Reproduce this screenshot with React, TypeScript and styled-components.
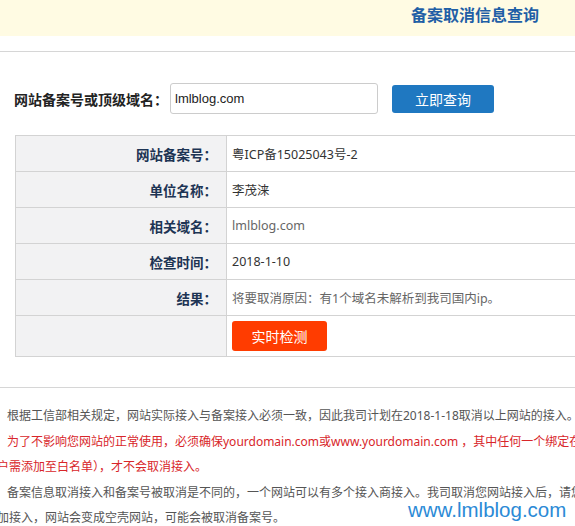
import styled, { createGlobalStyle } from "styled-components";

const GlobalStyle = createGlobalStyle`
    html, body {
        margin: 0;
        padding: 0;
        background: #ffffff;
        overflow: hidden;
    }

    body {
        font-family: "Segoe UI", "Noto Sans", "Noto Sans CJK SC", sans-serif;
        color: #333333;
    }
`;

interface Record {
    label: string;
    value: string;
    muted?: boolean;
}

const records: Record[] = [
    { label: "网站备案号：", value: "粤ICP备15025043号-2" },
    { label: "单位名称：", value: "李茂涞" },
    { label: "相关域名：", value: "lmlblog.com", muted: true },
    { label: "检查时间：", value: "2018-1-10" },
    { label: "结果：", value: "将要取消原因：有1个域名未解析到我司国内ip。", muted: true },
];

export default function App() {
    return (
        <>
            <GlobalStyle />
            <Page>
                <Header>
                    <Title>备案取消信息查询</Title>
                </Header>
                <Divider />

                <SearchRow>
                    <SearchLabel>网站备案号或顶级域名：</SearchLabel>
                    <SearchInput defaultValue="lmlblog.com" />
                    <QueryButton>立即查询</QueryButton>
                </SearchRow>

                <ResultTable>
                    <tbody>
                        {records.map((record) => (
                            <tr key={record.label}>
                                <LabelCell>{record.label}</LabelCell>
                                <ValueCell $muted={record.muted}>{record.value}</ValueCell>
                            </tr>
                        ))}
                        <tr>
                            <LabelCell />
                            <ActionCell>
                                <CheckButton>实时检测</CheckButton>
                            </ActionCell>
                        </tr>
                    </tbody>
                </ResultTable>

                <Divider $gap={30} />

                <Notes>
                    <Note>
                        根据工信部相关规定，网站实际接入与备案接入必须一致，因此我司计划在2018-1-18取消以上网站的接入。如有疑问请联系客服。
                    </Note>
                    <Note $warn>
                        为了不影响您网站的正常使用，必须确保yourdomain.com或www.yourdomain.com ，其中任何一个绑定在我司的域名（如果是我司客
                        <br />
                        户需添加至白名单），才不会取消接入。
                    </Note>
                    <Note>
                        备案信息取消接入和备案号被取消是不同的，一个网站可以有多个接入商接入。我司取消您网站接入后，请您尽快到其他接入商处添
                        <br />
                        加接入，网站会变成空壳网站，可能会被取消备案号。
                    </Note>
                </Notes>

                <Watermark>www.lmlblog.com</Watermark>
            </Page>
        </>
    );
}

const Page = styled.div`
    position: relative;
    width: 950px;
    height: 526px;
`;

const Header = styled.div`
    height: 36px;
    background: #fffbe3;
    display: flex;
    justify-content: center;
    align-items: flex-start;
    padding-top: 5px;
    box-sizing: border-box;
`;

const Title = styled.h1`
    margin: 0;
    font-size: 16px;
    line-height: 20px;
    font-weight: bold;
    color: #1f5fa6;
`;

const Divider = styled.hr<{ $gap?: number }>`
    margin: ${({ $gap }) => $gap ?? 15}px 0 0;
    border: 0;
    height: 1px;
    background: #d6d6d6;
`;

const SearchRow = styled.div`
    display: flex;
    align-items: center;
    margin-top: 31px;
    padding-left: 14px;
`;

const SearchLabel = styled.label`
    font-size: 14px;
    font-weight: bold;
    color: #222222;
`;

const SearchInput = styled.input`
    margin-left: 2px;
    width: 208px;
    height: 31px;
    box-sizing: border-box;
    padding: 0 4px;
    border: 1px solid #cccccc;
    border-radius: 3px;
    font-family: "Liberation Sans", Arial, sans-serif;
    font-size: 13px;
    color: #222222;
    outline: none;
`;

const QueryButton = styled.button`
    margin-left: 14px;
    width: 102px;
    height: 28px;
    border: 0;
    border-radius: 3px;
    background: #1f78c1;
    color: #ffffff;
    font-family: inherit;
    font-size: 14px;
    cursor: pointer;
`;

const ResultTable = styled.table`
    margin: 21px 0 0 15px;
    width: 935px;
    border-collapse: collapse;
    border: 1px solid #d3d3d3;
    font-size: 12.5px;

    td, th {
        border: 1px solid #d3d3d3;
        height: 36px;
        box-sizing: border-box;
    }
`;

const LabelCell = styled.th`
    width: 211px;
    padding: 0 9px 0 0;
    background: #f2f2f3;
    text-align: right;
    font-size: 13.5px;
    font-weight: bold;
    color: #1d3454;
`;

const ValueCell = styled.td<{ $muted?: boolean }>`
    padding: 0 0 0 5px;
    color: ${({ $muted }) => ($muted ? "#666666" : "#333333")};
`;

const ActionCell = styled.td`
    padding: 5px 0 5px 5px;

    && {
        height: 41px;
    }
`;

const CheckButton = styled.button`
    display: block;
    width: 95px;
    height: 30px;
    border: 0;
    border-radius: 3px;
    background: #ff3c00;
    color: #ffffff;
    font-family: inherit;
    font-size: 14px;
    cursor: pointer;
`;

const Notes = styled.div`
    margin: 15px 0 0 -3px;
    font-size: 12px;
    line-height: 25.5px;
    color: #555555;
`;

const Note = styled.p<{ $warn?: boolean }>`
    margin: 0;
    white-space: nowrap;
    text-indent: 10px;
    color: ${({ $warn }) => ($warn ? "#d8262a" : "#555555")};
`;

const Watermark = styled.span`
    position: absolute;
    left: 408px;
    top: 498px;
    font-family: "Liberation Sans", Arial, sans-serif;
    font-size: 20.5px;
    color: #2b8ad6;
    pointer-events: none;
`;
